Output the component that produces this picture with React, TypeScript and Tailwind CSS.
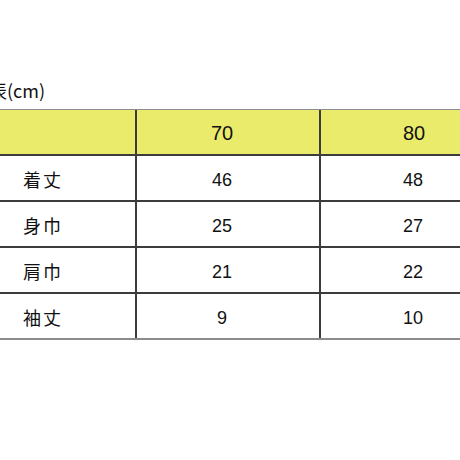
export default function App() {
  const rows = [
    ["着丈", "46", "48"],
    ["身巾", "25", "27"],
    ["肩巾", "21", "22"],
    ["袖丈", "9", "10"],
  ];
  const jp = { fontFamily: '"Noto Sans CJK JP", "Liberation Sans", sans-serif' };
  const num = { fontFamily: '"Liberation Sans", Arial, sans-serif' };
  return (
    <div className="w-[460px] h-[460px] overflow-hidden bg-white text-[#111]">
      <div className="h-[109px] flex items-end pb-[9px]">
        <div className="ml-[-11px] text-[18px] leading-[20px] whitespace-nowrap" style={jp}>
          表(cm)
        </div>
      </div>
      <div className="w-[540px] border-t border-[#8c8c8c]">
        <div className="grid grid-cols-[137px_184px_1fr] h-[46px] bg-[#ebeb6b] border-b-2 border-[#3c3c3c]">
          <div className="border-r-2 border-[#3c3c3c]" />
          <div className="border-r-2 border-[#3c3c3c] flex items-center justify-center pr-[12px] pt-[1px] text-[20px]" style={num}>
            70
          </div>
          <div className="flex items-center pl-[82px] pt-[1px] text-[20px]" style={num}>
            80
          </div>
        </div>
        {rows.map((r, i) => (
          <div
            key={i}
            className={
              "grid grid-cols-[137px_184px_1fr] h-[46px] border-b-2 " +
              (i === rows.length - 1 ? "border-[#8c8c8c]" : "border-[#3c3c3c]")
            }
          >
            <div className="border-r-2 border-[#3c3c3c] flex items-center pl-[23px] pt-[3px] text-[18px] tracking-[2px]" style={jp}>
              {r[0]}
            </div>
            <div className="border-r-2 border-[#3c3c3c] flex items-center justify-center pr-[12px] pt-[5px] text-[18px]" style={num}>
              {r[1]}
            </div>
            <div className="flex items-center pl-[82px] pt-[5px] text-[18px]" style={num}>
              {r[2]}
            </div>
          </div>
        ))}
      </div>
    </div>
  );
}
